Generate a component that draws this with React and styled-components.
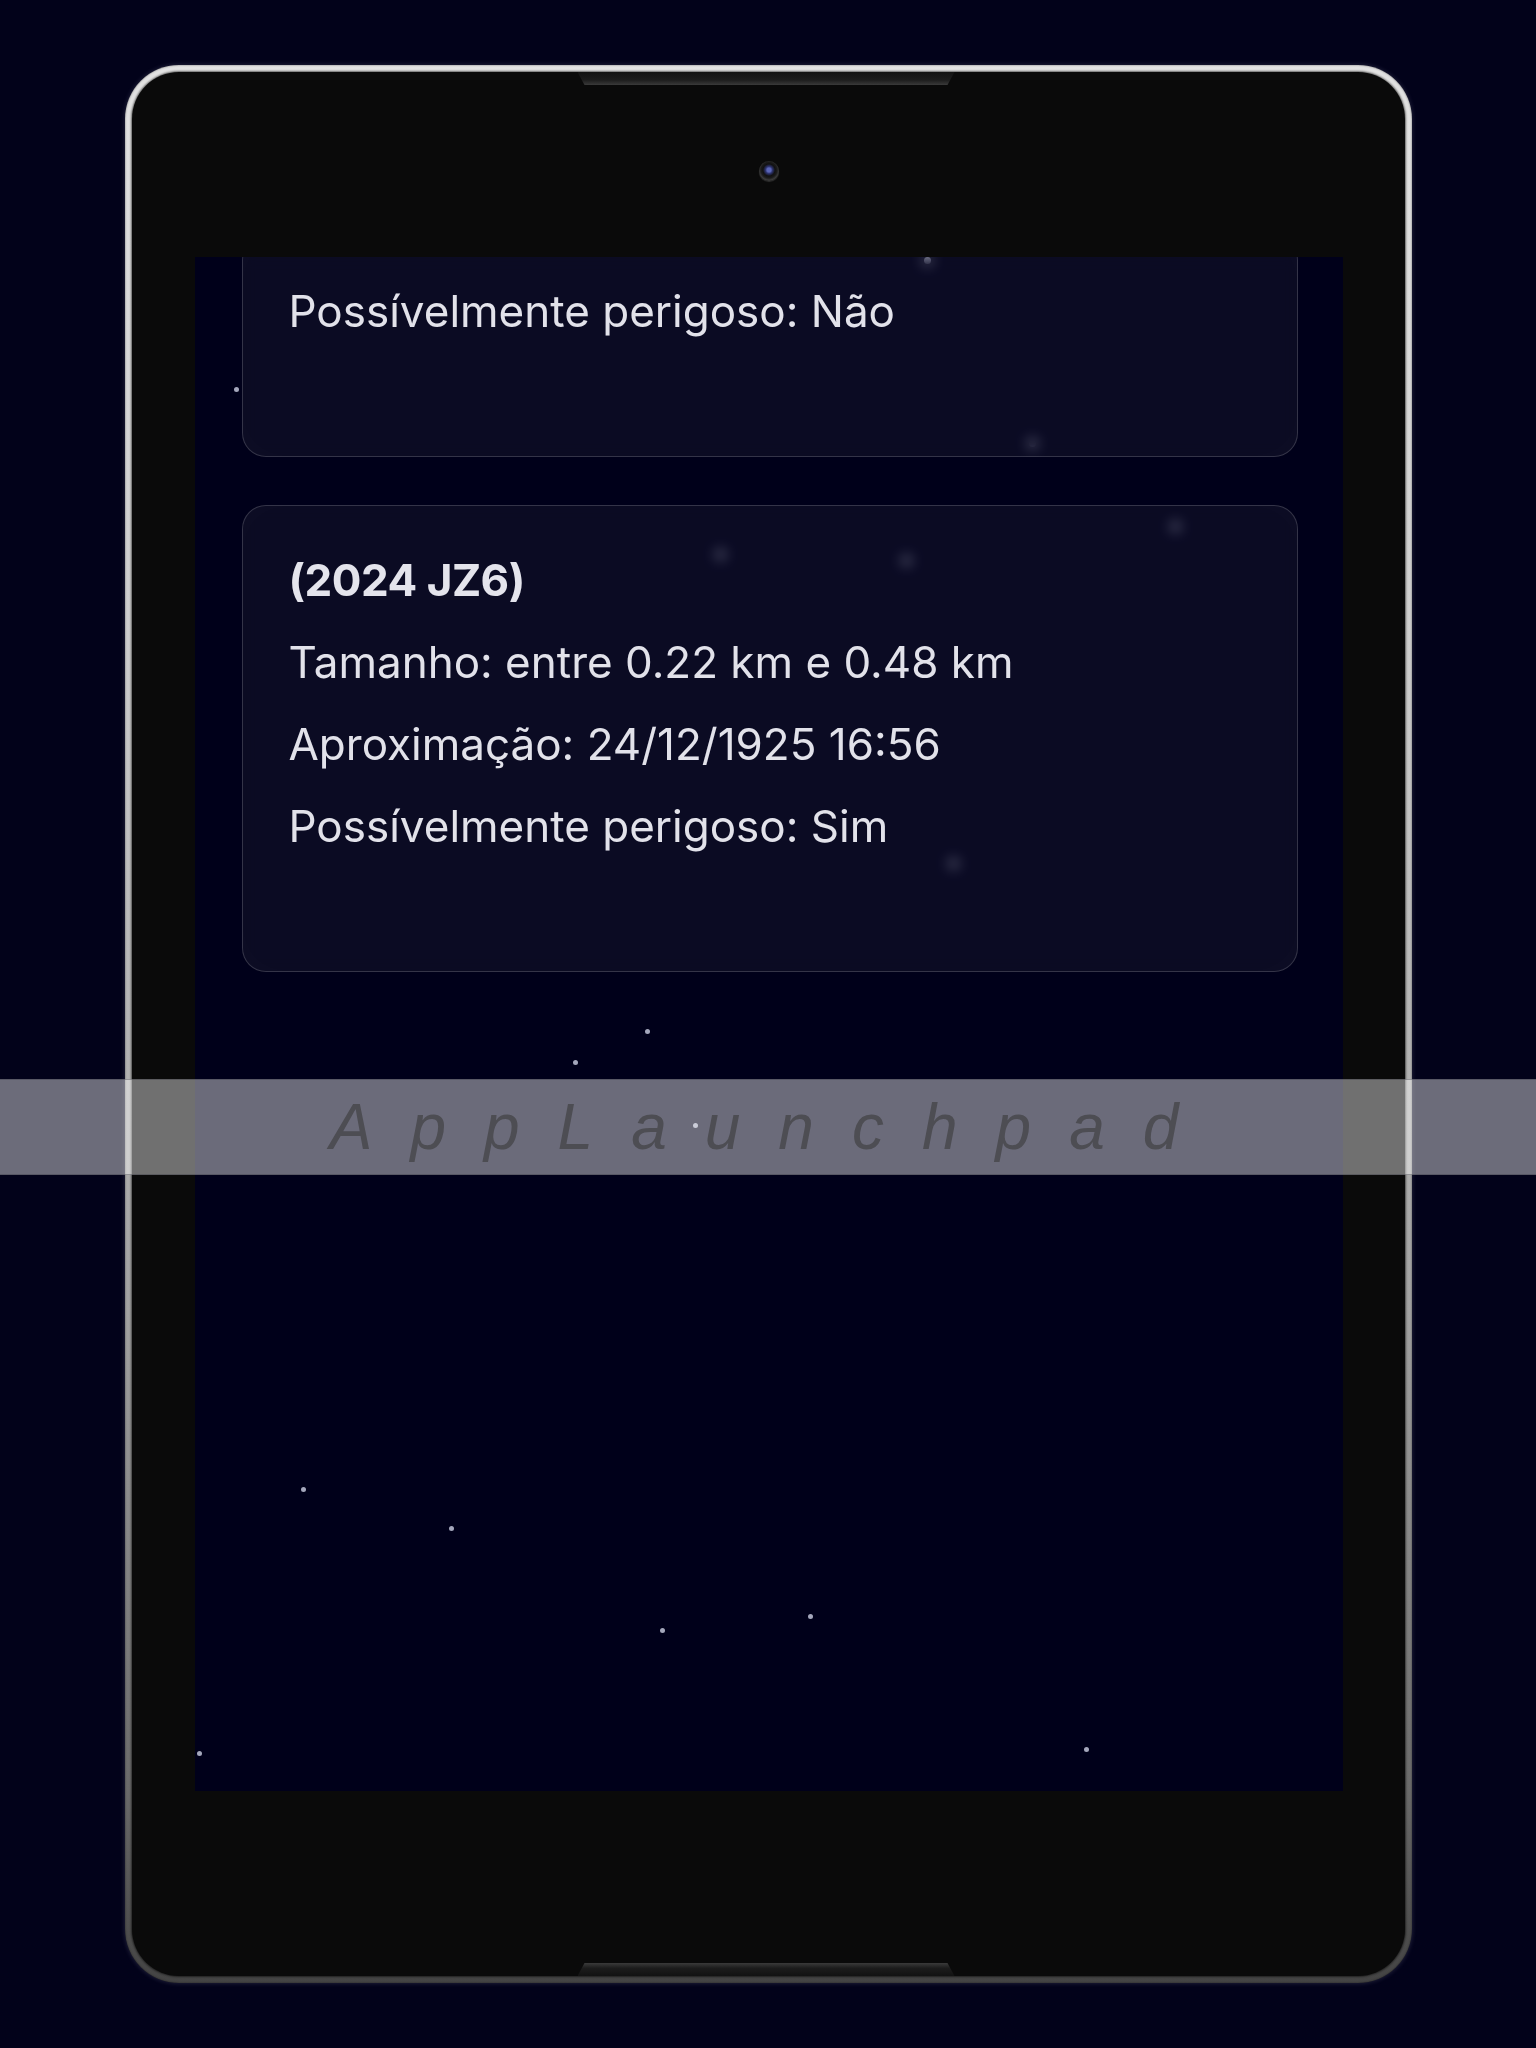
import React from 'react';
import styled, { createGlobalStyle } from 'styled-components';

const GlobalStyle = createGlobalStyle`
  html, body {
    margin: 0;
    padding: 0;
    background: #02021a;
  }
  body {
    font-family: Inter, 'Noto Sans', sans-serif;
  }
`;

const Page = styled.div`
  position: relative;
  width: 1536px;
  height: 2048px;
  box-sizing: border-box;
  padding-top: 65px;
  display: flex;
  justify-content: center;
  align-items: flex-start;
  overflow: hidden;
  background: #02021a;
`;

const Frame = styled.div`
  width: 1287px;
  height: 1918px;
  box-sizing: border-box;
  padding: 7px;
  border-radius: 54px;
  background: linear-gradient(180deg, #e2e2e2 0%, #cdcdcd 30%, #a2a2a2 65%, #6a6a6a 90%, #444 100%);
  box-shadow: inset 0 0 2px rgba(0, 0, 0, 0.55), 0 0 5px rgba(200, 200, 225, 0.2);
`;

const Bezel = styled.div`
  position: relative;
  height: 100%;
  box-sizing: border-box;
  padding: 0 62px 0 63px;
  border-radius: 47px;
  background: #0a0a0a;
  box-shadow: 0 0 2px 1px rgba(0, 0, 0, 0.55);
  display: flex;
  flex-direction: column;
`;

const Tab = styled.div`
  position: absolute;
  left: 446px;
  width: 377px;
  height: 13px;
  ${({ $bottom }) =>
    $bottom
      ? `
    bottom: 0;
    clip-path: polygon(7px 0, calc(100% - 7px) 0, 100% 100%, 0 100%);
    background: linear-gradient(180deg, #3a3a3a 0%, #1c1c1c 40%, #121212 100%);
  `
      : `
    top: 0;
    clip-path: polygon(0 0, 100% 0, calc(100% - 7px) 100%, 7px 100%);
    background: linear-gradient(180deg, #121212 0%, #1c1c1c 60%, #3a3a3a 100%);
  `}
`;

const TopBar = styled.div`
  height: 185px;
  box-sizing: border-box;
  padding-top: 12px;
  display: flex;
  align-items: center;
  justify-content: center;
`;

const Camera = styled.div`
  width: 20px;
  height: 20px;
  border-radius: 50%;
  background: radial-gradient(circle at 50% 45%, #5b66b8 0 2px, #2e3470 3.5px, #111 6px, #1b1b1b 8px, #3a3a3a 10px);
  box-shadow: 0 1px 1px rgba(120, 120, 120, 0.35);
`;

const BottomBar = styled.div`
  height: 185px;
`;

const Screen = styled.div`
  position: relative;
  flex: 1;
  overflow: hidden;
  background: #00001a;
`;

const StarField = styled.div`
  position: absolute;
  inset: 0;
  z-index: 0;
`;

const Star = styled.span`
  position: absolute;
  left: ${({ $x }) => $x}px;
  top: ${({ $y }) => $y}px;
  width: ${({ $size }) => $size}px;
  height: ${({ $size }) => $size}px;
  border-radius: 50%;
  background: #a4a7bc;
`;

const List = styled.div`
  position: relative;
  z-index: 1;
  margin-top: -21px;
  padding: 0 45px 0 47px;
  display: flex;
  flex-direction: column;
  gap: 48px;
`;

const Card = styled.div`
  padding: 48px 36px 118px 46px;
  border: 1px solid rgba(255, 255, 255, 0.17);
  border-radius: 24px;
  background: rgba(255, 255, 255, 0.045);
  backdrop-filter: blur(7px);
  box-shadow: inset 0 0 40px rgba(255, 255, 255, 0.015);
  display: flex;
  flex-direction: column;
  gap: 29px;
`;

const Title = styled.h3`
  margin: 0;
  font-size: 44px;
  line-height: 53px;
  font-weight: 700;
  color: #e4e4ec;
  letter-spacing: -0.5px;
`;

const Line = styled.p`
  margin: 0;
  font-size: 44px;
  line-height: 53px;
  font-weight: 400;
  color: #e2e2ea;
`;

const Watermark = styled.div`
  position: absolute;
  left: 0;
  right: 0;
  top: 1079px;
  height: 94px;
  display: flex;
  align-items: center;
  justify-content: center;
  padding-left: 10px;
  background: rgba(255, 255, 255, 0.42);
  border-top: 1px solid rgba(60, 60, 70, 0.4);
  border-bottom: 1px solid rgba(60, 60, 70, 0.4);
  font-family: 'Liberation Sans', Arial, sans-serif;
  font-style: italic;
  font-size: 64px;
  letter-spacing: 38px;
  color: #4d4d53;
  pointer-events: none;
`;

const stars = [
  { x: 39, y: 130, size: 5 },
  { x: 450, y: 772, size: 5 },
  { x: 378, y: 803, size: 5 },
  { x: 498, y: 866, size: 5 },
  { x: 106, y: 1230, size: 5 },
  { x: 254, y: 1269, size: 5 },
  { x: 465, y: 1371, size: 5 },
  { x: 613, y: 1357, size: 5 },
  { x: 2, y: 1494, size: 5 },
  { x: 889, y: 1490, size: 5 },
  { x: 522, y: 294, size: 7 },
  { x: 708, y: 300, size: 7 },
  { x: 977, y: 266, size: 7 },
  { x: 834, y: 183, size: 7 },
  { x: 755, y: 603, size: 7 },
  { x: 729, y: 0, size: 7 }
];

// the first card is scrolled up, only its last row is on screen
const asteroids = [
  {
    hazardous: false
  },
  {
    name: '(2024 JZ6)',
    size: 'entre 0.22 km e 0.48 km',
    approach: '24/12/1925 16:56',
    hazardous: true
  }
];

const AsteroidCard = ({ asteroid }) => (
  <Card>
    {asteroid.name && <Title>{asteroid.name}</Title>}
    {asteroid.size && <Line>Tamanho: {asteroid.size}</Line>}
    {asteroid.approach && <Line>Aproximação: {asteroid.approach}</Line>}
    <Line>Possívelmente perigoso: {asteroid.hazardous ? 'Sim' : 'Não'}</Line>
  </Card>
);

const App = () => (
  <Page>
    <GlobalStyle />
    <Frame>
      <Bezel>
        <Tab />
        <TopBar>
          <Camera />
        </TopBar>
        <Screen>
          <StarField>
            {stars.map((s, i) => (
              <Star key={i} $x={s.x} $y={s.y} $size={s.size} />
            ))}
          </StarField>
          <List>
            {asteroids.map((a, i) => (
              <AsteroidCard key={i} asteroid={a} />
            ))}
          </List>
        </Screen>
        <BottomBar />
        <Tab $bottom />
      </Bezel>
    </Frame>
    <Watermark>AppLaunchpad</Watermark>
  </Page>
);

export default App;
